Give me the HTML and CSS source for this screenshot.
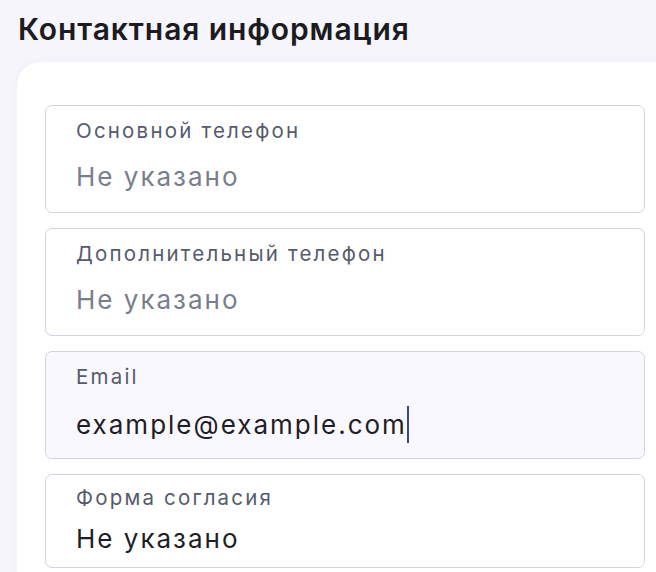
FILE: index.html
```html
<!DOCTYPE html>
<html lang="ru">
<head>
<meta charset="utf-8">
<link rel="stylesheet" href="styles.css">
</head>
<body>
<h1 class="title">Контактная информация</h1>
<div class="card">
  <div class="field">
    <div class="label">Основной телефон</div>
    <div class="value placeholder">Не указано</div>
  </div>
  <div class="field">
    <div class="label">Дополнительный телефон</div>
    <div class="value placeholder">Не указано</div>
  </div>
  <div class="field field-focus">
    <div class="label">Email</div>
    <div class="value">example@example.com<span class="caret"></span></div>
  </div>
  <div class="field field-compact">
    <div class="label">Форма согласия</div>
    <div class="value">Не указано</div>
  </div>
</div>
</body>
</html>
```
FILE: styles.css
```css
html, body {
  margin: 0;
  padding: 0;
  background: #f6f5fb;
  font-family: Inter, "Noto Sans", sans-serif;
  overflow: hidden;
}
.title {
  margin: 0;
  padding: 12px 0 0 18px;
  height: 50px;
  box-sizing: border-box;
  font-size: 30px;
  font-weight: 600;
  color: #1b1b21;
  letter-spacing: 0.9px;
  line-height: 34px;
}
.card {
  margin: 12px -20px 0 17px;
  background: #fff;
  border-radius: 24px;
  padding: 43px 31px 40px 28px;
  display: flex;
  flex-direction: column;
  gap: 15px;
  box-shadow: 0 0 6px rgba(120, 110, 170, 0.06);
}
.field {
  border: 1.5px solid #d3d4e3;
  border-radius: 7px;
  height: 108px;
  box-sizing: border-box;
  padding: 14px 30px 0;
  display: flex;
  flex-direction: column;
}
.label {
  font-size: 20.5px;
  line-height: 22px;
  color: #565b6b;
  letter-spacing: 2.2px;
}
.value {
  margin-top: 20px;
  font-size: 26px;
  line-height: 30px;
  color: #1e1e26;
  letter-spacing: 2px;
  display: flex;
  align-items: center;
}
.placeholder {
  color: #787e8e;
}
.field-focus {
  background: #f9f8fe;
}
.field-focus .value {
  margin-top: 18px;
}
.caret {
  display: inline-block;
  width: 2.5px;
  height: 37px;
  background: #37498a;
  margin-left: 0;
}
.field-compact {
  height: 94px;
  padding-top: 12px;
}
.field-compact .value {
  margin-top: 15px;
}
```
